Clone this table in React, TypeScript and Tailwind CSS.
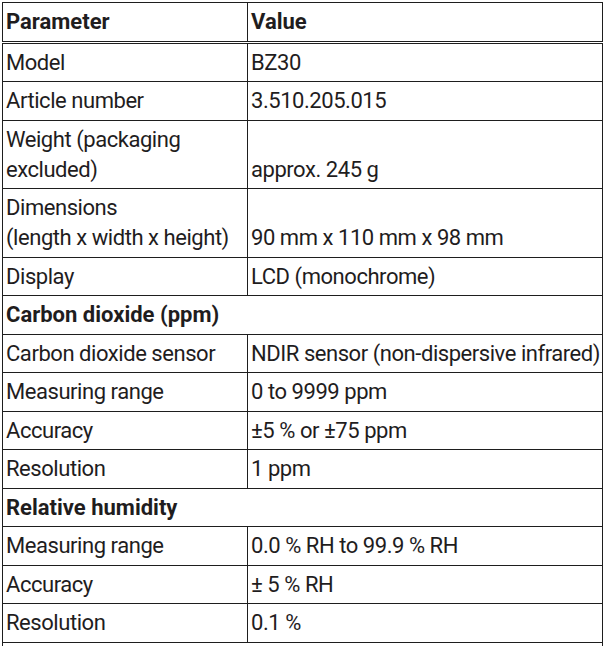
type Row =
  | { kind: "section"; label: string }
  | { kind: "item"; label: string[]; value: string };

const rows: Row[] = [
  { kind: "item", label: ["Model"], value: "BZ30" },
  { kind: "item", label: ["Article number"], value: "3.510.205.015" },
  { kind: "item", label: ["Weight (packaging", "excluded)"], value: "approx. 245 g" },
  { kind: "item", label: ["Dimensions", "(length x width x height)"], value: "90 mm x 110 mm x 98 mm" },
  { kind: "item", label: ["Display"], value: "LCD (monochrome)" },
  { kind: "section", label: "Carbon dioxide (ppm)" },
  { kind: "item", label: ["Carbon dioxide sensor"], value: "NDIR sensor (non-dispersive infrared)" },
  { kind: "item", label: ["Measuring range"], value: "0 to 9999 ppm" },
  { kind: "item", label: ["Accuracy"], value: "±5 % or ±75 ppm" },
  { kind: "item", label: ["Resolution"], value: "1 ppm" },
  { kind: "section", label: "Relative humidity" },
  { kind: "item", label: ["Measuring range"], value: "0.0 % RH to 99.9 % RH" },
  { kind: "item", label: ["Accuracy"], value: "± 5 % RH" },
  { kind: "item", label: ["Resolution"], value: "0.1 %" },
  { kind: "section", label: "" },
];

const cell = "border border-[#1e1e1e] pl-[3px] pr-0 pt-1 pb-[3.5px] align-bottom";

export default function App() {
  return (
    <div
      className="min-h-screen bg-white pt-[2px] pl-[2px] text-[22px] leading-[30px] tracking-[-0.45px] text-[#1f1d1e]"
      style={{ fontFamily: "Roboto, 'Liberation Sans', sans-serif" }}
    >
      <table className="w-[601px] table-fixed border-collapse">
        <colgroup>
          <col className="w-[245px]" />
          <col />
        </colgroup>
        <thead>
          <tr className="border-b-[3px] border-double border-[#1e1e1e]">
            <th className={`${cell} text-left font-bold tracking-normal border-b-[3px] border-double`}>Parameter</th>
            <th className={`${cell} text-left font-bold tracking-normal border-b-[3px] border-double`}>Value</th>
          </tr>
        </thead>
        <tbody>
          {rows.map((r, i) =>
            r.kind === "section" ? (
              <tr key={i}>
                <td colSpan={2} className={`${cell} h-[38.5px] font-bold tracking-normal`}>
                  {r.label}
                </td>
              </tr>
            ) : (
              <tr key={i}>
                <td className={`${cell} whitespace-nowrap`}>
                  {r.label.map((l, j) => (
                    <div key={j}>{l}</div>
                  ))}
                </td>
                <td className={`${cell} whitespace-nowrap`}>{r.value}</td>
              </tr>
            )
          )}
        </tbody>
      </table>
    </div>
  );
}
